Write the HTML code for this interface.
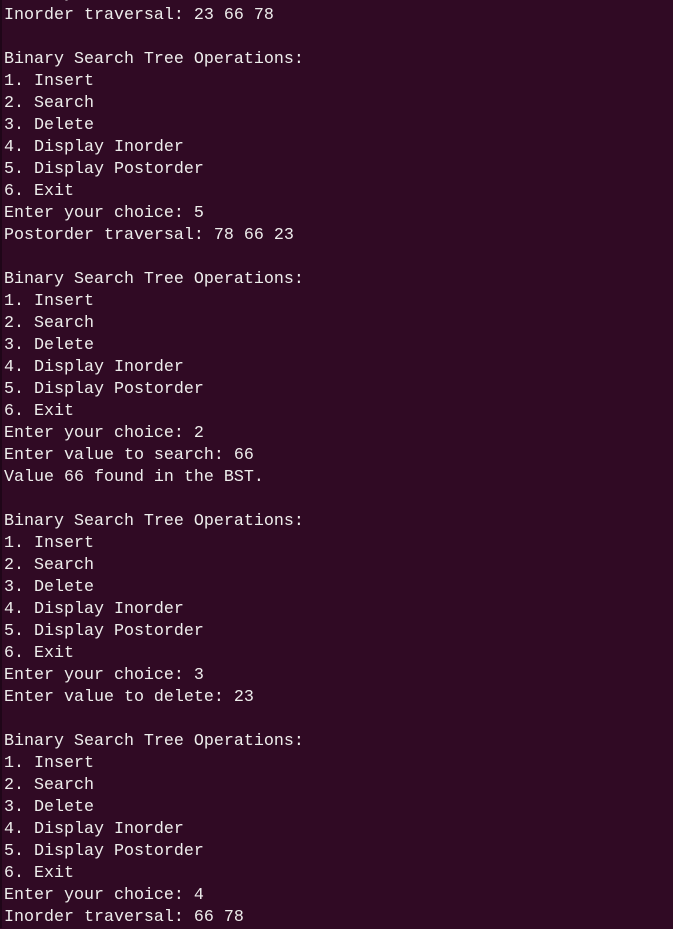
<!DOCTYPE html>
<html><head><meta charset="utf-8"><style>
html,body{margin:0;padding:0;}
body{width:673px;height:928px;background:#300a24;overflow:hidden;position:relative;}
.bar{position:absolute;left:0;top:0;width:2px;height:928px;background:#1f0618;}
pre{position:absolute;left:4px;top:-17px;margin:0;font-family:"Liberation Mono",monospace;font-size:16.67px;line-height:22px;color:#eeeeec;}
</style></head><body><div class="bar"></div><pre>Enter your choice: 4
Inorder traversal: 23 66 78

Binary Search Tree Operations:
1. Insert
2. Search
3. Delete
4. Display Inorder
5. Display Postorder
6. Exit
Enter your choice: 5
Postorder traversal: 78 66 23

Binary Search Tree Operations:
1. Insert
2. Search
3. Delete
4. Display Inorder
5. Display Postorder
6. Exit
Enter your choice: 2
Enter value to search: 66
Value 66 found in the BST.

Binary Search Tree Operations:
1. Insert
2. Search
3. Delete
4. Display Inorder
5. Display Postorder
6. Exit
Enter your choice: 3
Enter value to delete: 23

Binary Search Tree Operations:
1. Insert
2. Search
3. Delete
4. Display Inorder
5. Display Postorder
6. Exit
Enter your choice: 4
Inorder traversal: 66 78</pre></body></html>
